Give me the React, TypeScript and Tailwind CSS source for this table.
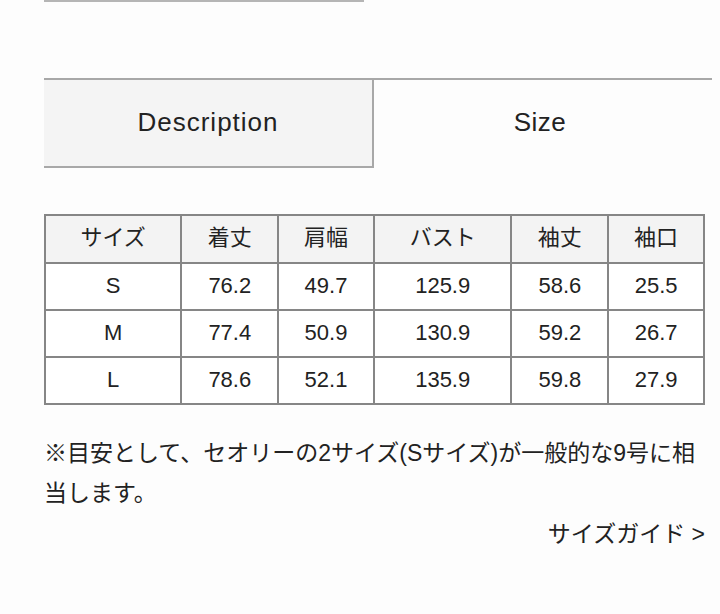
const rows = [
  ["S", "76.2", "49.7", "125.9", "58.6", "25.5"],
  ["M", "77.4", "50.9", "130.9", "59.2", "26.7"],
  ["L", "78.6", "52.1", "135.9", "59.8", "27.9"],
]

const heads = ["サイズ", "着丈", "肩幅", "バスト", "袖丈", "袖口"]
const widths = ["w-[137px]", "w-[97px]", "w-[96px]", "w-[138px]", "w-[97px]", "w-[96px]"]

export default function App() {
  return (
    <div
      className="w-[720px] h-[614px] bg-[#fdfdfd] text-[#222] overflow-hidden"
      style={{ fontFamily: '"Liberation Sans", "Noto Sans CJK JP", sans-serif' }}
    >
      <div className="ml-[44px] w-[320px] h-[2px] bg-[#b5b5b5]" />

      <div className="ml-[44px] mr-[8px] mt-[76px] border-t-2 border-[#a8a8a8] flex">
        <div className="w-[330px] h-[88px] bg-[#f4f4f4] border-r-2 border-b-2 border-[#a8a8a8] flex items-center justify-center text-[26px] tracking-[1px] pb-[2px]">
          Description
        </div>
        <div className="flex-1 flex items-center justify-center text-[26px] tracking-[0.5px] pb-[4px] pr-[6px]">Size</div>
      </div>

      <div className="ml-[44px] mt-[46px]">
        <table className="border-collapse w-[661px] text-[22px] text-center">
          <thead>
            <tr className="bg-[#f3f3f3] h-[48px]">
              {heads.map((h, i) => (
                <th key={h} className={`${widths[i]} font-normal border-2 border-[#868686] pb-[4px]`}>
                  {h}
                </th>
              ))}
            </tr>
          </thead>
          <tbody>
            {rows.map((r) => (
              <tr key={r[0]} className="bg-white h-[47px]">
                {r.map((c, i) => (
                  <td key={i} className="border-2 border-[#868686] pb-[2px]">
                    {c}
                  </td>
                ))}
              </tr>
            ))}
          </tbody>
        </table>
      </div>

      <p className="ml-[44px] mr-[20px] mt-[28px] text-[23px] leading-[40px]">
        ※目安として、セオリーの2サイズ(Sサイズ)が一般的な9号に相当します。
      </p>
      <div className="w-[705px] mt-[1px] text-right text-[23px] leading-[40px]">サイズガイド &gt;</div>
    </div>
  )
}
